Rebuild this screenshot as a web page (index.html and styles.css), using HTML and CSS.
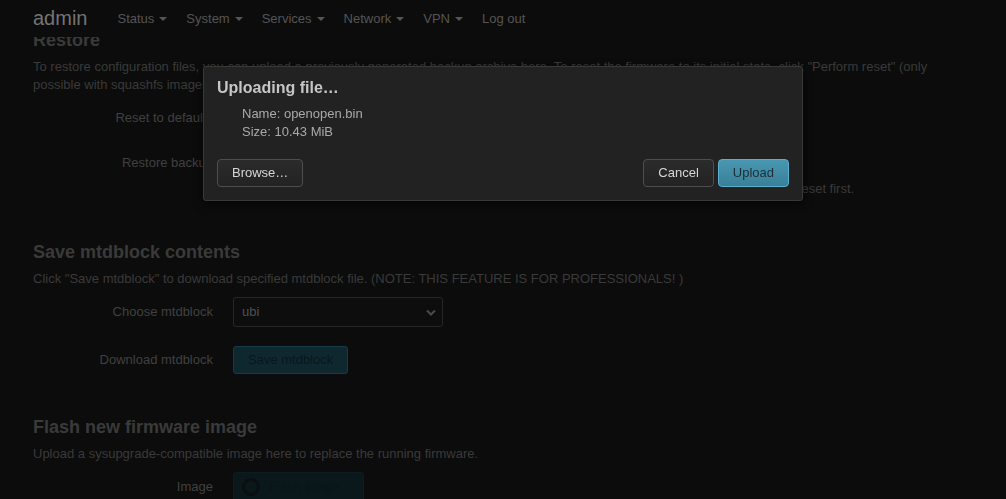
FILE: index.html
```html
<!DOCTYPE html>
<html>
<head>
<meta charset="utf-8">
<title>Flash operations</title>
<link rel="stylesheet" href="styles.css">
</head>
<body>
<header class="navbar">
  <span class="brand">admin</span>
  <nav class="nav">
    <span class="nav-item">Status <i class="caret"></i></span>
    <span class="nav-item">System <i class="caret"></i></span>
    <span class="nav-item">Services <i class="caret"></i></span>
    <span class="nav-item">Network <i class="caret"></i></span>
    <span class="nav-item">VPN <i class="caret"></i></span>
    <span class="nav-item">Log out</span>
  </nav>
</header>

<main class="main">
  <section class="section first">
    <h3 class="section-title">Restore</h3>
    <p class="section-desc">To restore configuration files, you can upload a previously generated backup archive here. To reset the firmware to its initial state, click "Perform reset" (only possible with squashfs images).</p>
    <div class="row">
      <label class="row-label">Reset to defaults</label>
      <div class="row-field"><span class="btn btn-danger">Perform reset</span></div>
    </div>
    <div class="row tight">
      <label class="row-label">Restore backup</label>
      <div class="row-field"><span class="btn btn-plain">Upload archive...</span></div>
    </div>
    <div class="row-help">Custom files (certificates, scripts) may remain on the system. To prevent this, perform a factory-reset first.</div>
  </section>

  <section class="section second">
    <h3 class="section-title">Save mtdblock contents</h3>
    <p class="section-desc">Click "Save mtdblock" to download specified mtdblock file. (NOTE: THIS FEATURE IS FOR PROFESSIONALS! )</p>
    <div class="row">
      <label class="row-label">Choose mtdblock</label>
      <div class="row-field">
        <div class="select">
          <span>ubi</span>
          <svg class="chev" width="10" height="7" viewBox="0 0 10 7"><path d="M1 1.5 L5 5.5 L9 1.5" fill="none" stroke="#4a4a4a" stroke-width="2"/></svg>
        </div>
      </div>
    </div>
    <div class="row">
      <label class="row-label">Download mtdblock</label>
      <div class="row-field"><span class="btn btn-save">Save mtdblock</span></div>
    </div>
  </section>

  <section class="section">
    <h3 class="section-title">Flash new firmware image</h3>
    <p class="section-desc">Upload a sysupgrade-compatible image here to replace the running firmware.</p>
    <div class="row">
      <label class="row-label">Image</label>
      <div class="row-field"><span class="btn btn-flash"><i class="spinner"></i>Flash image...</span></div>
    </div>
  </section>
</main>

<div class="modal">
  <h4 class="modal-title">Uploading file…</h4>
  <ul class="modal-info">
    <li>Name: openopen.bin</li>
    <li>Size: 10.43 MiB</li>
  </ul>
  <div class="modal-actions">
    <span class="mbtn">Browse…</span>
    <span class="spacer"></span>
    <span class="mbtn">Cancel</span>
    <span class="mbtn mbtn-primary">Upload</span>
  </div>
</div>
</body>
</html>
```

FILE: styles.css
```css
* { box-sizing: border-box; }

html, body {
  margin: 0;
  padding: 0;
  height: 100%;
  overflow: hidden;
}

body {
  background: #0c0c0c;
  font-family: "Liberation Sans", Arial, sans-serif;
  font-size: 13px;
  line-height: 18px;
  color: #3b3b3b;
}

.navbar {
  position: fixed;
  top: 0;
  left: 0;
  right: 0;
  height: 37px;
  background: #0c0c0c;
  display: flex;
  align-items: center;
  padding-left: 33px;
  z-index: 5;
}

.brand {
  font-size: 20px;
  color: #747474;
  margin-right: 30px;
  line-height: 24px;
  margin-top: -1px;
}

.nav {
  display: flex;
  gap: 19px;
  color: #555;
  font-size: 13px;
}

.nav-item {
  display: flex;
  align-items: center;
}

.caret {
  display: inline-block;
  width: 0;
  height: 0;
  margin-left: 5px;
  border-top: 4px solid #555;
  border-left: 4px solid transparent;
  border-right: 4px solid transparent;
}

.main {
  padding: 30px 33px 0 33px;
}

.section { margin-bottom: 43px; }
.section.first { margin-bottom: 44px; }
.section.second { margin-bottom: 42px; }

.section-title {
  margin: 0;
  font-size: 18px;
  line-height: 20px;
  font-weight: bold;
  color: #3a3a3a;
}

.section-desc {
  margin: 8px 0 9px 0;
  color: #3a3a3a;
}

.row {
  display: flex;
  align-items: center;
  height: 30px;
  margin-bottom: 18px;
}

.section.first .row { margin-bottom: 15px; }
.section.first .row.tight { margin-bottom: 2px; }

.row-label {
  width: 200px;
  text-align: right;
  padding-right: 20px;
  color: #404040;
}

.row-help {
  padding-left: 216px;
  color: #3a3a3a;
}

.btn {
  display: inline-flex;
  align-items: center;
  height: 28px;
  padding: 0 14px;
  border-radius: 3px;
  border: 1px solid #2a2a2a;
}

.btn-danger { background: #2a1010; color: #1a0505; }
.btn-plain { background: #1a1a1a; color: #444; }

.btn-save {
  background: #0f2830;
  border-color: #163b47;
  color: #09171c;
}

.btn-flash {
  background: #0a181c;
  border-color: #0c1d22;
  color: #0a1317;
  height: 30px;
  padding: 0 12px 0 8px;
}

.spinner {
  display: inline-block;
  width: 18px;
  height: 18px;
  border-radius: 50%;
  border: 3px solid #0a0f11;
  margin-right: 9px;
}

.select {
  width: 210px;
  height: 30px;
  border: 1px solid #262626;
  border-radius: 3px;
  background: #0d0d0d;
  display: flex;
  align-items: center;
  justify-content: space-between;
  padding: 0 6px 0 8px;
  color: #505050;
}

.modal {
  position: fixed;
  top: 66px;
  left: 203px;
  width: 600px;
  height: 135px;
  background: #222;
  border: 1px solid #393939;
  border-radius: 3px;
  box-shadow: 0 3px 10px rgba(0, 0, 0, 0.6);
  padding: 11px 13px 13px 13px;
  z-index: 10;
  display: flex;
  flex-direction: column;
}

.modal-title {
  margin: 0;
  font-size: 16px;
  line-height: 20px;
  font-weight: bold;
  color: #c6c6c6;
}

.modal-info {
  list-style: none;
  margin: 7px 0 0 0;
  padding: 0 0 0 25px;
  color: #a9a9a9;
}

.modal-actions {
  display: flex;
  gap: 4px;
  margin-top: auto;
}

.spacer { flex: 1; }

.mbtn {
  display: inline-flex;
  align-items: center;
  justify-content: center;
  height: 28px;
  padding: 0 14px;
  border: 1px solid #4e4e4e;
  border-radius: 4px;
  background: linear-gradient(#2b2b2b, #232323);
  color: #d6d6d6;
}

.mbtn-primary {
  background: linear-gradient(#4897b2, #3a7f98);
  border-color: #58afcf;
  color: #1d2e36;
}
```
